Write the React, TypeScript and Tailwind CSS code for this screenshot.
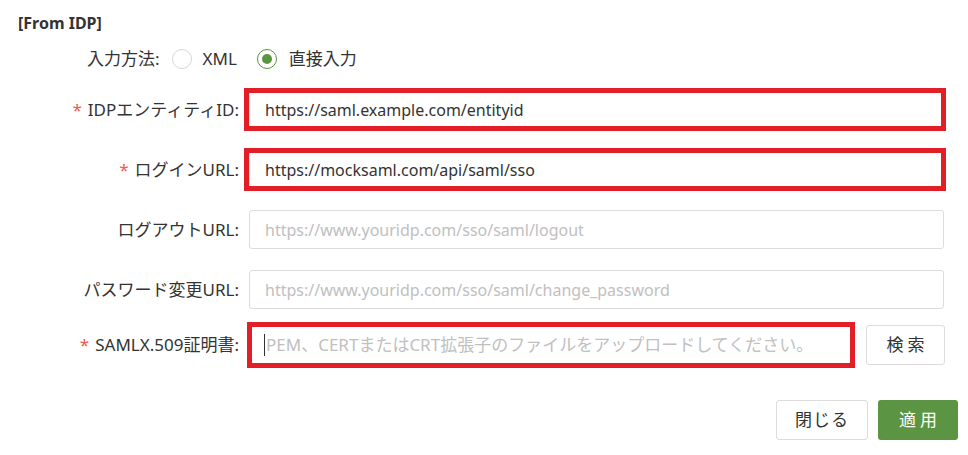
import React from "react";

const font = { fontFamily: '"Noto Sans", "Noto Sans CJK JP", sans-serif' };

function Label({ text, required }: { text: string; required?: boolean }) {
  return (
    <div className="w-[241px] shrink-0 text-right text-[17px] text-[#333] pr-[2px] leading-[22px]">
      {required && <span className="text-[#f0594f] mr-[6px]">*</span>}
      {text}:
    </div>
  );
}

function Field({
  value,
  placeholder,
  red,
}: {
  value?: string;
  placeholder?: string;
  red?: boolean;
}) {
  return (
    <div className="relative w-[695px] h-[39px]">
      <div className="w-full h-full border border-[#dcdcdc] rounded-[3px] bg-white flex items-center px-[15px] text-[16px]">
        {value ? (
          <span className="text-[#333]">{value}</span>
        ) : (
          <span className="text-[#c0c0c0]">{placeholder}</span>
        )}
      </div>
      {red && (
        <div className="absolute -top-[2px] -bottom-[2px] -left-[5px] -right-[2px] border-[5px] border-[#e21f26]" />
      )}
    </div>
  );
}

export default function App() {
  return (
    <div className="w-[968px] h-[455px] bg-white relative overflow-hidden" style={font}>
      <div className="pl-[18px] pt-[13px] text-[16px] font-bold text-[#333] leading-[20px]">
        [From IDP]
      </div>
      <div className="flex items-center h-[24px] mt-[14px] pl-[87px] text-[17px] text-[#333]">
        <span>入力方法:</span>
        <span className="ml-[12px] w-[20px] h-[20px] rounded-full border border-[#d6d6d6] bg-white" />
        <span className="ml-[11px]">XML</span>
        <span className="ml-[20px] w-[20px] h-[20px] rounded-full border border-[#5b9442] bg-white flex items-center justify-center">
          <span className="w-[10px] h-[10px] rounded-full bg-[#5b9442]" />
        </span>
        <span className="ml-[12px]">直接入力</span>
      </div>

      <div className="flex items-center mt-[19px] gap-[8px]">
        <Label text="IDPエンティティID" required />
        <Field value="https://saml.example.com/entityid" red />
      </div>
      <div className="flex items-center mt-[21px] gap-[8px]">
        <Label text="ログインURL" required />
        <Field value="https://mocksaml.com/api/saml/sso" red />
      </div>
      <div className="flex items-center mt-[21px] gap-[8px]">
        <Label text="ログアウトURL" />
        <Field placeholder="https://www.youridp.com/sso/saml/logout" />
      </div>
      <div className="flex items-center mt-[21px] gap-[8px]">
        <Label text="パスワード変更URL" />
        <Field placeholder="https://www.youridp.com/sso/saml/change_password" />
      </div>
      <div className="flex items-center mt-[16px] gap-[8px]">
        <Label text="SAMLX.509証明書" required />
        <div className="relative w-[604px] h-[40px]">
          <div className="w-full h-full border border-[#dcdcdc] rounded-[3px] bg-white flex items-center pl-[14px] text-[17px]">
            <span className="w-px h-[22px] bg-[#333] mr-[1px]" />
            <span className="text-[#c0c0c0]">
              PEM、CERTまたはCRT拡張子のファイルをアップロードしてください。
            </span>
          </div>
          <div className="absolute -top-[3px] -bottom-[3px] -left-[2px] -right-[2px] border-[5px] border-[#e21f26]" />
        </div>
        <button className="ml-[5px] w-[79px] h-[40px] border border-[#dcdcdc] rounded-[3px] bg-white text-[17px] text-[#333] tracking-[4px] pl-[4px]">
          検索
        </button>
      </div>

      <div className="flex justify-end gap-[10px] pr-[10px] mt-[35px]">
        <button className="w-[92px] h-[40px] border border-[#dcdcdc] rounded-[3px] bg-white text-[17px] text-[#333] tracking-[1px]">
          閉じる
        </button>
        <button className="w-[80px] h-[40px] rounded-[3px] bg-[#5b9442] text-[17px] text-white tracking-[4px] pl-[4px]">
          適用
        </button>
      </div>
    </div>
  );
}
